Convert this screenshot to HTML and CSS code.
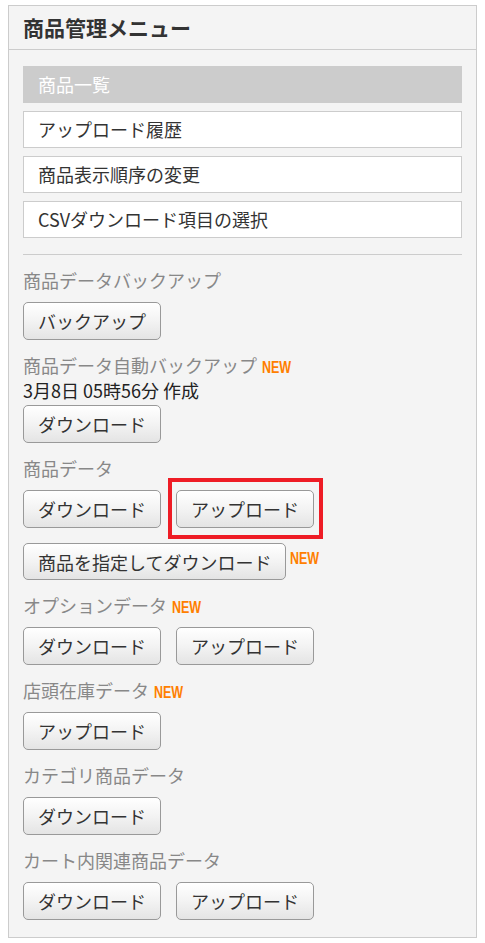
FILE: index.html
```html
<!DOCTYPE html>
<html lang="ja">
<head>
    <meta charset="UTF-8">
    <title>商品管理メニュー</title>
    <link rel="stylesheet" href="styles.css">
</head>
<body>
<div class="panel">
    <h2 class="panel-title">商品管理メニュー</h2>
    <div class="panel-body">
        <ul class="menu">
            <li class="menu-item active">商品一覧</li>
            <li class="menu-item">アップロード履歴</li>
            <li class="menu-item">商品表示順序の変更</li>
            <li class="menu-item">CSVダウンロード項目の選択</li>
        </ul>

        <div class="data-list">
            <div class="section">
                <div class="label">商品データバックアップ</div>
                <div class="buttons">
                    <button class="btn">バックアップ</button>
                </div>
            </div>

            <div class="section">
                <div class="label">商品データ自動バックアップ<span class="new">NEW</span></div>
                <div class="date">3月8日 05時56分 作成</div>
                <div class="buttons">
                    <button class="btn">ダウンロード</button>
                </div>
            </div>

            <div class="section">
                <div class="label">商品データ</div>
                <div class="buttons">
                    <button class="btn">ダウンロード</button>
                    <span class="highlight"><button class="btn">アップロード</button></span>
                </div>
                <div class="buttons second">
                    <button class="btn">商品を指定してダウンロード</button><span class="new">NEW</span>
                </div>
            </div>

            <div class="section">
                <div class="label">オプションデータ<span class="new">NEW</span></div>
                <div class="buttons">
                    <button class="btn">ダウンロード</button>
                    <button class="btn">アップロード</button>
                </div>
            </div>

            <div class="section">
                <div class="label">店頭在庫データ<span class="new">NEW</span></div>
                <div class="buttons">
                    <button class="btn">アップロード</button>
                </div>
            </div>

            <div class="section">
                <div class="label">カテゴリ商品データ</div>
                <div class="buttons">
                    <button class="btn">ダウンロード</button>
                </div>
            </div>

            <div class="section">
                <div class="label">カート内関連商品データ</div>
                <div class="buttons">
                    <button class="btn">ダウンロード</button>
                    <button class="btn">アップロード</button>
                </div>
            </div>
        </div>
    </div>
</div>
</body>
</html>
```

FILE: styles.css
```css
body {
    margin: 5px 8px;
    font-family: "Noto Sans CJK JP", "Noto Sans", sans-serif;
    color: #333;
    background: #fff;
}

.panel {
    background: #f4f4f4;
    border: 1px solid #ccc;
}

.panel-title {
    margin: 0;
    height: 43px;
    line-height: 43px;
    padding: 0 14px;
    font-size: 21px;
    font-weight: bold;
    color: #333;
    border-bottom: 1px solid #ccc;
}

.panel-body {
    padding: 16px 14px 17px;
}

/* メニュー */
.menu {
    list-style: none;
    margin: 0;
    padding: 0 0 16px;
    display: flex;
    flex-direction: column;
    gap: 8px;
    border-bottom: 1px solid #ccc;
}

.menu-item {
    height: 35px;
    line-height: 35px;
    padding: 0 14px;
    font-size: 18px;
    background: #fff;
    border: 1px solid #ccc;
}

.menu-item.active {
    background: #ccc;
    color: #fff;
}

/* データ */
.data-list {
    padding-top: 13px;
    display: flex;
    flex-direction: column;
    gap: 13px;
}

.label {
    height: 25px;
    font-size: 18px;
    line-height: 25px;
    color: #888;
    margin-bottom: 9px;
}

.date {
    height: 25px;
    font-size: 18px;
    line-height: 25px;
    color: #222;
    margin-top: -9px;
    margin-bottom: 2px;
}

.buttons {
    display: flex;
    align-items: center;
    gap: 15px;
}

.buttons.second {
    margin-top: 15px;
    gap: 4px;
}

.btn {
    height: 38px;
    padding: 0 14px;
    font-family: inherit;
    font-size: 18px;
    color: #333;
    background: linear-gradient(180deg, #fff 0%, #f3f3f3 50%, #e4e4e4 100%);
    border: 1px solid #999;
    border-radius: 5px;
    cursor: pointer;
}

.buttons.second .btn {
    height: 37px;
}

.new {
    display: inline-block;
    margin-left: 5px;
    font-family: "Liberation Sans", sans-serif;
    font-size: 16px;
    line-height: 16px;
    font-weight: bold;
    color: #ff7f00;
    transform: scaleX(0.78);
    transform-origin: left;
}

.buttons .new {
    align-self: flex-start;
    margin-left: 0;
    margin-top: 8px;
}

/* 赤枠 */
.highlight {
    position: relative;
    display: flex;
}

.highlight::after {
    content: '';
    position: absolute;
    top: -12px;
    left: -8px;
    right: -9px;
    bottom: -11px;
    border: 4px solid #ee1c25;
    pointer-events: none;
}
```
